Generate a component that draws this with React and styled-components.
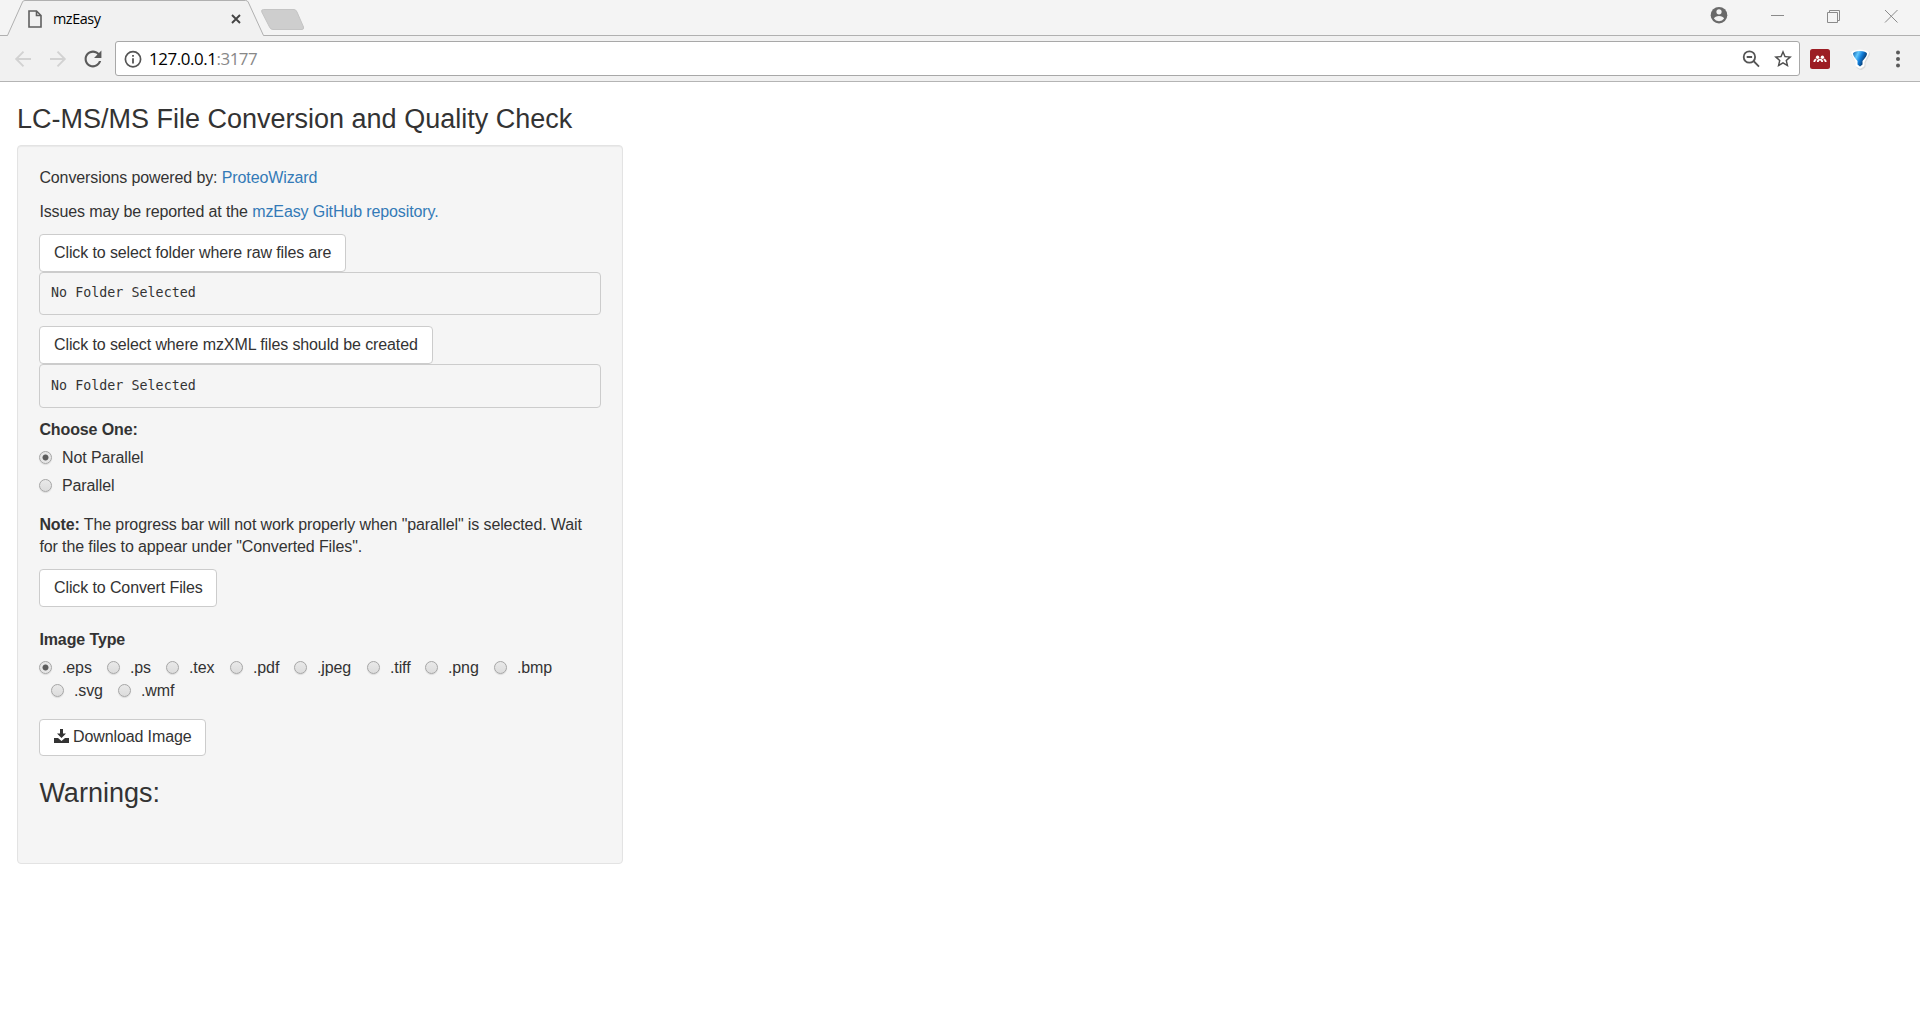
import React from 'react';
import styled, { createGlobalStyle } from 'styled-components';

const Global = createGlobalStyle`
  * { box-sizing: border-box; }
  html, body { margin: 0; background: #fff; }
  body { width: 1920px; height: 1030px; overflow: hidden; font-family: "Liberation Sans", Arial, sans-serif; font-size: 16px; line-height: 22px; letter-spacing: -0.11px; color: #333; }
`;

const Window = styled.div`
  display: flex;
  flex-direction: column;
  height: 1030px;
`;

const TabStrip = styled.header`
  display: flex;
  height: 36px;
  background: linear-gradient(#f4f4f4 35px, #b0b0b0 35px);
`;

const Tab = styled.div`
  position: relative;
  width: 270px;
  height: 36px;
  display: flex;
  align-items: center;
  padding-left: 28px;
  font: 14.4px/18px "Open Sans", sans-serif;
  color: #000;
`;

const TabShape = styled.svg`
  position: absolute;
  left: 0;
  top: 0;
`;

const TabTitle = styled.span`
  position: relative;
  flex: 1;
  margin-left: 11px;
  padding-top: 1px;
  letter-spacing: -0.45px;
`;

const TabIcon = styled.svg`
  position: relative;
  margin-top: 2px;
  margin-right: ${(p) => p.$after || 0}px;
`;

const NewTab = styled.svg`
  margin-left: -10px;
  margin-top: 8px;
`;

const WindowControls = styled.div`
  display: flex;
  margin-left: auto;
  height: 35px;
`;

const Toolbar = styled.nav`
  display: flex;
  align-items: center;
  height: 46px;
  padding-left: 14px;
  background: #f1f1f1;
  border-bottom: 1px solid #b4b4b4;
`;

const NavIcon = styled.svg`
  flex: none;
  margin-right: ${(p) => p.$after || 0}px;
`;

const AddressBar = styled.div`
  display: flex;
  align-items: center;
  width: 1685px;
  height: 35px;
  padding: 0 7px 0 8px;
  background: #fff;
  border: 1px solid #a8a8a8;
  border-radius: 3px;
`;

const Url = styled.span`
  flex: 1;
  margin-left: 7px;
  font: 16.9px/22px "Open Sans", sans-serif;
  letter-spacing: -0.43px;
  color: #000;
`;

const Port = styled.span`
  color: #888;
`;

const Page = styled.main`
  padding: 23px 17px 0;
`;

const Heading = styled.h2`
  margin: 0;
  font-size: 27px;
  font-weight: 400;
  line-height: 29px;
  letter-spacing: 0;
`;

const Well = styled.section`
  width: 606px;
  height: 719px;
  margin-top: 11px;
  padding: 20px 21px 0 21.4px;
  background: #f5f5f5;
  border: 1px solid #e3e3e3;
  border-radius: 4px;
  box-shadow: inset 0 1px 1px rgba(0, 0, 0, 0.05);
`;

const Paragraph = styled.p`
  margin: 0;
  padding: 1px 0 11px;
  white-space: nowrap;
`;

const Link = styled.a`
  color: #337ab7;
  text-decoration: none;
`;

const Button = styled.button`
  display: flex;
  align-items: center;
  width: ${(p) => p.$width}px;
  height: ${(p) => p.$height || 38}px;
  margin: 0 0 0 -0.4px;
  padding: 0 0 ${(p) => (p.$height ? 2 : 0)}px 14px;
  font: inherit;
  letter-spacing: inherit;
  color: #333;
  white-space: nowrap;
  background: #fff;
  border: 1px solid #ccc;
  border-radius: 4px;
`;

const Output = styled.pre`
  width: 562px;
  height: ${(p) => p.$height}px;
  margin: 0 0 ${(p) => p.$after}px -0.4px;
  padding: ${(p) => p.$height - 33}px 11px 0;
  font: 13.3px/20px "DejaVu Sans Mono", monospace;
  letter-spacing: 0.04px;
  border: 1px solid #ccc;
  border-radius: 4px;
`;

const GroupLabel = styled.div`
  font-weight: 700;
`;

const Choices = styled.div`
  display: flex;
  flex-direction: column;
  gap: 6px;
  margin: 5px 0 17px;
`;

const InlineChoices = styled.div`
  display: flex;
  height: 23px;
  margin-left: ${(p) => p.$indent || 0}px;
`;

const Choice = styled.label`
  display: flex;
  width: ${(p) => (p.$width ? p.$width + 'px' : 'auto')};
  height: 22px;
  padding-top: 1px;
  white-space: nowrap;
`;

const Radio = styled.input`
  appearance: none;
  flex: none;
  width: 13px;
  height: 13px;
  margin: 4px ${(p) => p.$gap}px 0 -0.4px;
  border: 1px solid #a6a6a6;
  border-radius: 50%;
  background: linear-gradient(#e9e9e9, #dcdcdc);
  box-shadow: 0 1px 1px rgba(0, 0, 0, 0.1);
  &:checked {
    background: radial-gradient(circle, #5c5c5c 2.6px, #e6e6e6 3.4px);
  }
`;

const DownloadIcon = styled.svg`
  margin: -2px 4px 0 0;
`;

const Stack = styled.div`
  margin-top: ${(p) => p.$top}px;
`;

const FIRST_ROW = [['.eps', 68], ['.ps', 59], ['.tex', 64], ['.pdf', 64], ['.jpeg', 73], ['.tiff', 58], ['.png', 69], ['.bmp', 70]];
const SECOND_ROW = [['.svg', 67], ['.wmf', 70]];

function BrowserTabs() {
  return (
    <TabStrip>
      <Tab>
        <TabShape width="270" height="36">
          <path d="M0 36V35.5H7.500L22.500 2Q23 .5 25 .5H245.500Q247.500 .5 248.200 2L263.500 35.500H270V36Z" fill="#f1f1f1" />
          <path d="M0 35.500H7.500L22.500 2Q23 .5 25 .5H245.500Q247.500 .5 248.200 2L263.500 35.500H270" fill="none" stroke="#b0b0b0" />
        </TabShape>
        <TabIcon width="14" height="18" viewBox="0 0 14 18" fill="none" stroke="#5f5f5f" strokeWidth="1.6">
          <path d="M1 1H8.500L13 5.500V17H1ZM8.500 1V5.500H13" />
        </TabIcon>
        <TabTitle>mzEasy</TabTitle>
        <TabIcon $after={29} width="10" height="10" viewBox="0 0 10 10" stroke="#444" strokeWidth="1.9">
          <path d="M1 1L9 9M9 1L1 9" />
        </TabIcon>
      </Tab>
      <NewTab width="46" height="24">
        <path d="M3.500 1.500H34Q36 1.500 37 4L43.500 19Q44 21.500 42 21.500H13Q10.500 21.500 9.500 19L1.800 4Q1 1.500 3.500 1.500Z" fill="#cecece" stroke="#c4c4c4" />
      </NewTab>
      <WindowControls>
        <svg width="230" height="35" viewBox="1690 0 230 35" fill="none" stroke="#8a8a8a" strokeWidth="1">
          <circle cx="1719" cy="15.200" r="8.300" fill="#6a6a6a" stroke="none" />
          <circle cx="1719" cy="11.800" r="2.600" fill="#f4f4f4" stroke="none" />
          <path d="M1713.900 18.600Q1715 16 1719 16T1724.100 18.600Q1722.400 21.200 1719 21.200T1713.900 18.600Z" fill="#f4f4f4" stroke="none" />
          <path d="M1771 15.500H1784M1827.500 12.500H1837.500V22.500H1827.500ZM1829.500 12V10.500H1839.500V20.500H1838M1885 10L1897.500 22.500M1897.500 10L1885 22.500" />
        </svg>
      </WindowControls>
    </TabStrip>
  );
}

function BrowserToolbar() {
  return (
    <Toolbar>
      <NavIcon $after={17} width="18" height="18" viewBox="0 0 18 18" fill="none" stroke="#d2d2d2" strokeWidth="1.900"><path d="M17 9H2.500M9.500 1.700L2.200 9L9.500 16.300" /></NavIcon>
      <NavIcon $after={16} width="18" height="18" viewBox="0 0 18 18" fill="none" stroke="#d2d2d2" strokeWidth="1.900"><path d="M1 9H15.500M8.500 1.700L15.800 9L8.500 16.300" /></NavIcon>
      <NavIcon $after={12} width="20" height="20" viewBox="2.500 2.500 19 19" fill="#5a5a5a"><path d="M17.650 6.350C16.200 4.900 14.210 4 12 4c-4.420 0-7.990 3.580-7.990 8s3.570 8 7.990 8c3.730 0 6.840-2.550 7.730-6h-2.080c-.82 2.330-3.040 4-5.650 4-3.310 0-6-2.690-6-6s2.690-6 6-6c1.660 0 3.140.69 4.220 1.780L13 11h7V4l-2.350 2.350z" /></NavIcon>
      <AddressBar>
        <NavIcon width="18" height="18" viewBox="0 0 18 18"><circle cx="9" cy="9.300" r="7.600" fill="none" stroke="#555" strokeWidth="1.700" /><path d="M8.100 8.200H9.900V13.500H8.100ZM8.100 5H9.900V6.700H8.100Z" fill="#555" /></NavIcon>
        <Url>127.0.0.1<Port>:3177</Port></Url>
        <NavIcon $after={14} width="18" height="18" viewBox="0 0 18 18" fill="none" stroke="#555" strokeWidth="1.800"><circle cx="7.400" cy="7" r="5.700" /><path d="M4.700 7H10.100M11.500 11L17 16.600" /></NavIcon>
        <NavIcon width="18" height="17" viewBox="2 2 20 19" fill="#4f4f4f"><path d="M22 9.240l-7.190-.62L12 2 9.190 8.630 2 9.240l5.460 4.730L5.820 21 12 17.270 18.180 21l-1.630-7.030L22 9.240zM12 15.400l-3.760 2.270 1-4.280-3.320-2.880 4.380-.38L12 6.100l1.710 4.040 4.380.38-3.320 2.880 1 4.280L12 15.400z" /></NavIcon>
      </AddressBar>
      <NavIcon width="120" height="44" viewBox="1800 37 120 44">
        <defs>
          <linearGradient id="fan" x1="0" x2="1" y1="0" y2="0.500">
            <stop offset="0" stopColor="#0a5cab" />
            <stop offset="0.350" stopColor="#62c8fd" />
            <stop offset="0.600" stopColor="#1480dc" />
            <stop offset="1" stopColor="#04264f" />
          </linearGradient>
        </defs>
        <rect x="1810" y="49" width="20" height="20" rx="2.500" fill="#9c1d24" />
        <circle cx="1817.600" cy="57.200" r="1.700" fill="#fff" />
        <circle cx="1822.400" cy="57.200" r="1.700" fill="#fff" />
        <path d="M1814.300 62Q1814.300 59.700 1816.300 59.300M1817.800 62Q1817.900 59.700 1820 59.700T1822.200 62M1825.700 62Q1825.700 59.700 1823.700 59.300" fill="none" stroke="#fff" strokeWidth="1.800" />
        <path d="M1853.500 54Q1860 51 1867.500 54L1863 62V66L1861 67.500L1858.500 66V62Z" fill="#d4d4d4" stroke="#dcdcdc" strokeWidth="5" strokeLinejoin="round" />
        <path d="M1853 53Q1860 50 1867 53L1862.500 61.500V65L1860 66.500L1857.500 65V61.500Z" fill="#fff" stroke="#fff" strokeWidth="4" strokeLinejoin="round" />
        <path d="M1853 53.500Q1854 51 1860 51T1867 53.500Q1867 56 1862.500 61V64.500L1860 66.500L1857.500 64.500V61Q1853 56 1853 53.500Z" fill="url(#fan)" />
        <circle cx="1898" cy="52.500" r="2" fill="#5a5a5a" /><circle cx="1898" cy="59" r="2" fill="#5a5a5a" /><circle cx="1898" cy="65.500" r="2" fill="#5a5a5a" />
      </NavIcon>
    </Toolbar>
  );
}

function ImageChoices({ items, indent }) {
  return (
    <InlineChoices $indent={indent}>
      {items.map(([name, width]) => (
        <Choice key={name} $width={width}>
          <Radio type="radio" name="image" $gap={10} defaultChecked={name === '.eps'} />{name}
        </Choice>
      ))}
    </InlineChoices>
  );
}

export default function App() {
  return (
    <Window>
      <Global />
      <BrowserTabs />
      <BrowserToolbar />
      <Page>
        <Heading>LC-MS/MS File Conversion and Quality Check</Heading>
        <Well>
          <Paragraph>Conversions powered by: <Link>ProteoWizard</Link></Paragraph>
          <Paragraph>Issues may be reported at the <Link>mzEasy GitHub repository.</Link></Paragraph>
          <Button $width={307}>Click to select folder where raw files are</Button>
          <Output $height={43} $after={11}>No Folder Selected</Output>
          <Button $width={394}>Click to select where mzXML files should be created</Button>
          <Output $height={44} $after={11}>No Folder Selected</Output>
          <GroupLabel>Choose One:</GroupLabel>
          <Choices>
            <Choice><Radio type="radio" name="mode" $gap={10} defaultChecked />Not Parallel</Choice>
            <Choice><Radio type="radio" name="mode" $gap={10} />Parallel</Choice>
          </Choices>
          <Paragraph>
            <b>Note:</b> The progress bar will not work properly when "parallel" is selected. Wait<br />
            for the files to appear under "Converted Files".
          </Paragraph>
          <Button $width={178}>Click to Convert Files</Button>
          <Stack $top={22}>
            <GroupLabel>Image Type</GroupLabel>
            <Stack $top={5}>
              <ImageChoices items={FIRST_ROW} />
              <ImageChoices items={SECOND_ROW} indent={12} />
            </Stack>
          </Stack>
          <Stack $top={17}>
            <Button $width={167} $height={37}>
              <DownloadIcon width="15" height="14" viewBox="0 0 15 14" fill="#333">
                <path d="M6 0H9V4.500H12L7.500 9L3 4.500H6ZM0 9H4L7.500 12L11 9H15V14H0Z" />
              </DownloadIcon>
              Download Image
            </Button>
          </Stack>
          <Stack $top={23}><Heading as="h3">Warnings:</Heading></Stack>
        </Well>
      </Page>
    </Window>
  );
}
